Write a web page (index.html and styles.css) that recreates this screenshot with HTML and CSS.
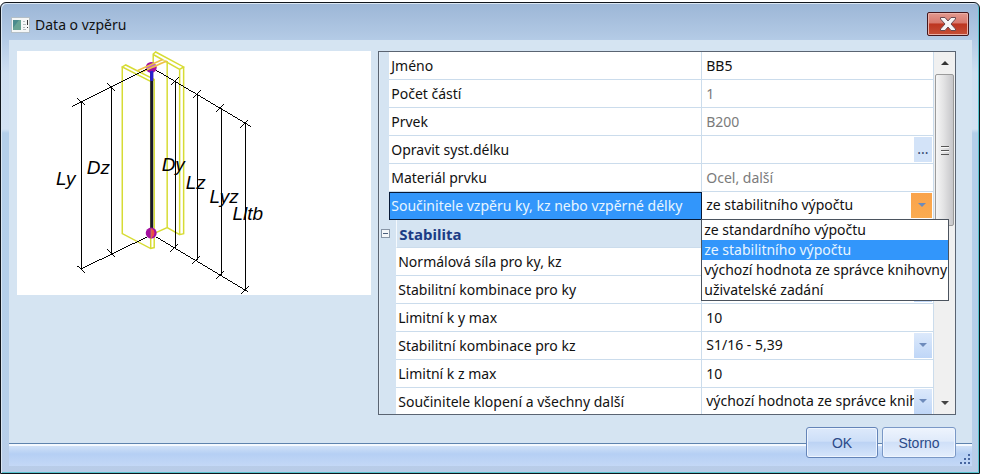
FILE: index.html
```html
<!DOCTYPE html>
<html lang="cs">
<head>
<meta charset="utf-8">
<title>Data o vzpěru</title>
<link rel="stylesheet" href="styles.css">
</head>
<body>
<main class="window">
  <header class="titlebar">
    <svg class="app-icon" width="19" height="16" viewBox="0 0 19 16" aria-hidden="true">
      <rect x=".5" y=".5" width="18" height="15" fill="#f5f7f7" stroke="#b4bfc7"/>
      <rect x="2" y="3" width="8" height="10" fill="#69a394"/>
      <path d="M2 3h6l-6 8z" fill="#4b8b8d"/>
      <path d="M12 4.500h2M12 7.500h3M12 10.500h2M12 12.500h3" stroke="#b5bdc0"/>
      <path d="M16.500 3v5M16.500 10v1" stroke="#333"/>
    </svg>
    <h1 class="title">Data o vzpěru</h1>
    <button class="close" type="button" aria-label="Zavřít">
      <svg width="18" height="16" viewBox="0 0 18 16" aria-hidden="true">
        <path d="M1.500 1.500h4.500l3 3.500 3-3.500h4.500v1.500l-4.500 5 4.500 5v1.500h-4.500l-3-3.500-3 3.500h-4.500v-1.500l4.500-5-4.500-5z" fill="#f6f6f6" stroke="#6b4a50"/>
      </svg>
    </button>
  </header>
  <form class="client">
    <div class="content">
      <div class="preview">
        <svg class="drawing" viewBox="17 51 355 245" role="img" aria-label="Vzpěrné délky">
          <g fill="none" stroke="#d7dc34" stroke-width="1.500">
            <path d="M153.500 65V54l2.500-2 28 15-4 2.500-26.500-15M180 69v166l4-1V67M167.500 61v167M154 234l13.500-6 12.500 7"/>
            <path d="M122.500 67v167l28.500 15 3.500-1V79.500L126 65l-3.500 2L151 81.500l3.500-2M151 81v168"/>
          </g>
          <circle cx="151.500" cy="67.500" r="5.500" fill="#a310a0"/>
          <path d="M138 70.500l25-11 4 1.500-25 11z" fill="#fff" fill-opacity=".35"/>
          <path d="M138 70.500l25-11M142 72l25-11M154 67l8-4" fill="none" stroke="#edc044" stroke-width="1.500"/>
          <path d="M152 72v161" stroke="#17172c" stroke-width="3"/>
          <path d="M152 71v10" stroke="#2a20d0" stroke-width="3"/>
          <circle cx="151.500" cy="233.500" r="5.500" fill="#a310a0"/>
          <path d="M152 229a5 5 0 0 1 0 9z" fill="#ee4b45"/>
          <path d="M151.500 229v10" stroke="#d98a3c"/>
          <g fill="none" stroke="#000" shape-rendering="crispEdges">
            <path d="M72 106.500L147 69M156 70l96 57M81 269.500l66-32M156 237l92 55"/>
            <path d="M81.500 102v167M111.500 87v166M175.500 81v167M197.500 94v166M221.500 108v167M245.500 124v167"/>
            <path d="M77 98l8 7M107 83l8 8M171 85l8-8M193 98l8-8M217 112l8-8M241 128l8-8"/>
            <path d="M77 266l8 7M107 249l8 8M171 252l8-8M193 264l8-8M217 279l8-8M241 295l8-8"/>
          </g>
          <g class="dims">
            <text x="56" y="185">Ly</text>
            <text x="87" y="174">Dz</text>
            <text x="162" y="171">Dy</text>
            <text x="186" y="189">Lz</text>
            <text x="210" y="203">Lyz</text>
            <text x="233" y="220">Lltb</text>
          </g>
        </svg>
      </div>
      <div class="grid">
        <div class="rows">
          <table class="props">
            <colgroup><col class="c-gutter"><col class="c-indent"><col class="c-name"><col class="c-value"></colgroup>
            <tbody>
            <tr><td class="gutter"></td><th colspan="2"><label for="f1">Jméno</label></th><td><input id="f1" value="BB5"></td></tr>
            <tr><td class="gutter"></td><th colspan="2"><label for="f2">Počet částí</label></th><td><input id="f2" value="1" disabled></td></tr>
            <tr><td class="gutter"></td><th colspan="2"><label for="f3">Prvek</label></th><td><input id="f3" value="B200" disabled></td></tr>
            <tr><td class="gutter"></td><th colspan="2"><label for="f4">Opravit syst.délku</label></th><td><div class="cell"><input id="f4" value=""><button class="more" type="button" aria-label="Upravit">...</button></div></td></tr>
            <tr><td class="gutter"></td><th colspan="2"><label for="f5">Materiál prvku</label></th><td><input id="f5" value="Ocel, další" disabled></td></tr>
            <tr><td class="gutter"></td><th colspan="2" class="current"><label for="f6">Součinitele vzpěru ky, kz nebo vzpěrné délky</label></th>
              <td><div class="cell open"><select id="f6"><option>ze stabilitního výpočtu</option></select><span class="arrow"></span>
                <ul class="menu" role="listbox">
                  <li role="option">ze standardního výpočtu</li>
                  <li role="option" class="chosen" aria-selected="true">ze stabilitního výpočtu</li>
                  <li role="option">výchozí hodnota ze správce knihovny</li>
                  <li role="option">uživatelské zadání</li>
                </ul></div></td></tr>
            <tr class="group"><td class="gutter" colspan="2"><button class="toggle" type="button" aria-label="Sbalit"></button></td><th colspan="2">Stabilita</th></tr>
            <tr><td class="gutter" colspan="2"></td><th><label for="f8">Normálová síla pro ky, kz</label></th><td><div class="cell"><select id="f8"></select><span class="arrow"></span></div></td></tr>
            <tr><td class="gutter" colspan="2"></td><th><label for="f9">Stabilitní kombinace pro ky</label></th><td><div class="cell"><select id="f9"></select><span class="arrow"></span></div></td></tr>
            <tr><td class="gutter" colspan="2"></td><th><label for="f10">Limitní k y max</label></th><td><input id="f10" value="10"></td></tr>
            <tr><td class="gutter" colspan="2"></td><th><label for="f11">Stabilitní kombinace pro kz</label></th><td><div class="cell"><select id="f11"><option>S1/16 - 5,39</option></select><span class="arrow"></span></div></td></tr>
            <tr><td class="gutter" colspan="2"></td><th><label for="f12">Limitní k z max</label></th><td><input id="f12" value="10"></td></tr>
            <tr><td class="gutter" colspan="2"></td><th><label for="f13">Součinitele klopení a všechny další</label></th><td><div class="cell"><select id="f13"><option>výchozí hodnota ze správce knihovny</option></select><span class="arrow"></span></div></td></tr>
            </tbody>
          </table>
        </div>
        <div class="scrollbar">
          <button class="step up" type="button" aria-label="Nahoru"></button>
          <div class="thumb"><span class="grip"></span></div>
          <button class="step down" type="button" aria-label="Dolů"></button>
        </div>
      </div>
    </div>
    <footer class="footer">
      <button class="btn primary" type="button">OK</button>
      <button class="btn" type="button">Storno</button>
      <svg class="resize" width="12" height="12" viewBox="0 0 12 12" aria-hidden="true">
        <path d="M8 0h2v2h-2zM4 4h2v2h-2zM8 4h2v2h-2zM0 8h2v2h-2zM4 8h2v2h-2zM8 8h2v2h-2z" fill="#4766a0"/>
      </svg>
    </footer>
  </form>
</main>
</body>
</html>
```
FILE: styles.css
```css
* { box-sizing: border-box; }

body {
  margin: 0;
  height: 100vh;
  padding: 2px 1px 1px 0;
  background: #fff;
  color: #111;
  font: 14px/20px "Noto Sans", "Open Sans", sans-serif;
}

button, input, select { font: inherit; color: inherit; margin: 0; }

.window {
  height: 100%;
  display: flex;
  flex-direction: column;
  padding: 0 7px 7px 8px;
  border: 1px solid #10151c;
  border-radius: 6px 6px 0 0;
  box-shadow: inset 1px 1px #dbe7f3, inset -1px -1px #58c4cf;
  background: linear-gradient(#9cb6d6, #b4cbe6 37px, #cfdff1 70px, #d3e2f3 126px, #b4cfea 130px, #b6cfe9 420px, #b9cce8);
}

.titlebar {
  flex: none;
  height: 37px;
  display: flex;
  align-items: center;
  padding: 6px 3px 0 2px;
}
.app-icon { flex: none; }
.title { flex: 1; margin: 0 0 0 5px; font-size: 14px; font-weight: 400; }
.close {
  width: 42px;
  height: 24px;
  margin-bottom: 2px;
  padding: 0;
  display: flex;
  align-items: center;
  justify-content: center;
  border: 1px solid #43171c;
  border-radius: 2px;
  box-shadow: inset 0 0 0 1px #eab0a8;
  background: linear-gradient(#e2998f, #d8796d 45%, #bd3520 50%, #c54f37);
}

.client {
  flex: 1;
  min-height: 0;
  display: flex;
  flex-direction: column;
  background: #d5e4f2;
}
.content {
  flex: 1;
  min-height: 0;
  display: flex;
  align-items: flex-start;
  gap: 7px;
  padding: 11px 16px 0 8px;
}
.preview { flex: 355; background: #fff; }
.drawing { display: block; width: 100%; }
.dims { font: italic 19px "Liberation Sans", sans-serif; }

.grid {
  flex: 577;
  align-self: stretch;
  min-width: 0;
  display: flex;
  border: 1px solid #5a6472;
  background: #fff;
}
.rows {
  flex: 1;
  min-width: 0;
  height: 100%;
  contain: size;
  clip-path: inset(0 -30px 0 0);
  z-index: 1;
}
.props { width: 100%; table-layout: fixed; border-collapse: separate; border-spacing: 0; }
.c-gutter { width: 10px; }
.c-indent { width: 7px; }
.c-name { width: 306px; }
.props td, .props th {
  height: 28px;
  padding: 0;
  border-bottom: 1px solid #cbdcec;
  font-weight: 400;
  text-align: left;
  white-space: nowrap;
}
.props th { padding-left: 2px; border-right: 1px solid #cbdcec; }
.props td { border-right: 1px solid #cbdcec; }
.props .gutter { background: #d5e4f2; border: 0; line-height: 0; }
.props .gutter[colspan] + th { padding-left: 2px; }
.props .current { background: #3296fb; color: #e8f5ff; border: 1px solid #071a38; padding-left: 1px; }
.props .group th {
  background: #d5e4f2;
  color: #1c3c86;
  font-size: 15px;
  font-weight: 700;
  border-left: 1px solid #f5f9fd;
}
.props .group th { padding-left: 1px; }

.toggle {
  width: 9px;
  height: 9px;
  margin: 0 0 2px 2px;
  padding: 0;
  border: 1px solid #8795a6;
  background: linear-gradient(#4b5f7c, #4b5f7c) center / 5px 1px no-repeat #f5f7f9;
}

input, select {
  display: block;
  width: 100%;
  height: 26px;
  padding: 0 0 1px 4px;
  border: 0;
  outline: 0;
  background: transparent;
  appearance: none;
}
input:disabled { color: #7b7b7b; }
.cell { position: relative; display: flex; padding-right: 1px; }
.cell input, .cell select { flex: 1; width: 0; min-width: 0; }
.more {
  width: 18px;
  height: 25px;
  padding: 0;
  border: 0;
  background: #d3e3f8;
  color: #33466c;
}
.arrow {
  width: 18px;
  height: 25px;
  background: linear-gradient(#dce9fb, #bfd6f7);
  display: flex;
  align-items: center;
  justify-content: center;
  pointer-events: none;
}
.arrow::before {
  content: "";
  border: 4px solid transparent;
  border-top-color: #6e8bbb;
  border-bottom: 0;
}
.open .arrow { width: 21px; background: linear-gradient(#f9a34c, #fbab4f); }

.menu {
  position: absolute;
  z-index: 2;
  top: 26px;
  left: -1px;
  width: max-content;
  min-width: 248px;
  margin: 0;
  padding: 0;
  list-style: none;
  border: 1px solid #4b535e;
  background: #fff;
}
.menu li { height: 20px; padding-left: 2px; }
.menu .chosen { background: #3296fb; color: #e8f5ff; }

.scrollbar {
  flex: none;
  width: 21px;
  display: flex;
  flex-direction: column;
  background: #f0f0f0;
}
.step { height: 22px; padding: 0; border: 0; background: none; display: flex; align-items: center; justify-content: center; }
.step::before { content: ""; border: 4px solid transparent; }
.up::before { border-bottom-color: #333; border-top: 0; }
.down::before { border-top-color: #444; border-bottom: 0; }
.down { margin-top: auto; }
.thumb {
  width: 19px;
  height: 152px;
  margin-left: 1px;
  display: flex;
  align-items: center;
  justify-content: center;
  border: 1px solid #9b9b9b;
  border-radius: 2px;
  background: linear-gradient(90deg, #f6f6f6, #e3e3e4 45%, #c6c6c9);
}
.grip { width: 8px; height: 9px; background: repeating-linear-gradient(#555 0 1px, #f7f7f7 1px 2px, transparent 2px 4px); }

.footer {
  flex: none;
  height: 51px;
  display: flex;
  align-items: flex-start;
  justify-content: flex-end;
  gap: 4px;
  padding: 12px 0 0;
  background: linear-gradient(transparent 28px, #5e83ae 28px 29px, #f4f9ff 29px 31px, #d0e1f8 31px, #b5cff4 39px, #c4d8f6);
}
.btn {
  width: 74px;
  height: 31px;
  padding: 0;
  border: 1px solid #7a98c6;
  border-radius: 3px;
  box-shadow: inset 0 0 0 1px #eef5ff;
  background: linear-gradient(#eef4fd, #dfeafa 45%, #d0e0f8 50%, #e4eefc);
  color: #2b4a88;
  font: 14px/20px "Liberation Sans", sans-serif;
}
.primary { width: 72px; border-color: #6484b8; background: linear-gradient(#dde9fb, #cddff8 45%, #bcd3f4 50%, #d6e5fb); }
.resize { align-self: flex-end; }
```
